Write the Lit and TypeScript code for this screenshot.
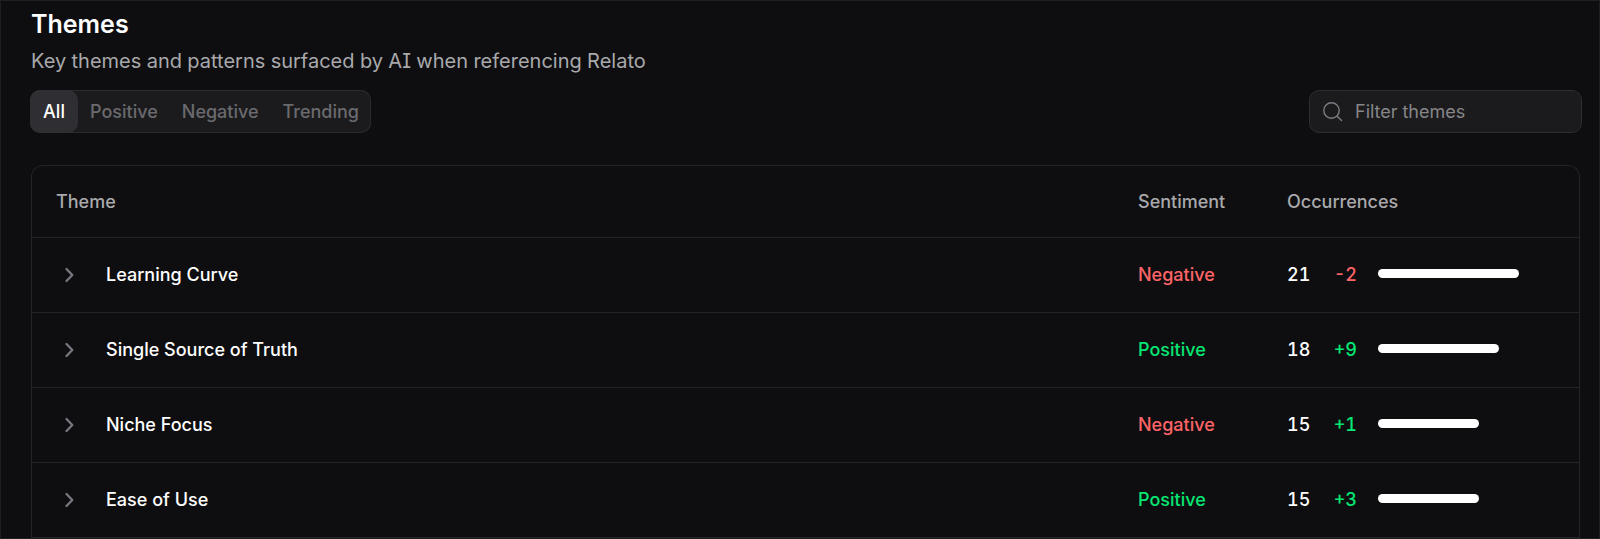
import { LitElement, html, css } from "lit";
import { customElement, state } from "lit/decorators.js";
import { classMap } from "lit/directives/class-map.js";

interface Theme {
  name: string;
  sentiment: "Negative" | "Positive";
  count: number;
  delta: number;
}

const THEMES: Theme[] = [
  { name: "Learning Curve", sentiment: "Negative", count: 21, delta: -2 },
  { name: "Single Source of Truth", sentiment: "Positive", count: 18, delta: 9 },
  { name: "Niche Focus", sentiment: "Negative", count: 15, delta: 1 },
  { name: "Ease of Use", sentiment: "Positive", count: 15, delta: 3 },
];

const TABS = ["All", "Positive", "Negative", "Trending"];

@customElement("app-root")
export class AppRoot extends LitElement {
  @state() private tab = "All";
  @state() private query = "";

  static styles = css`
    :host {
      display: block;
      box-sizing: border-box;
      min-height: 100vh;
      padding: 7px 19px 0 30px;
      border: 1px solid #1f1f21;
      background: #0e0e10;
      color: #fff;
      font: 400 18px/24px Inter, sans-serif;
      font-optical-sizing: none;
      font-feature-settings: "cv08", "tnum";
    }
    *, *::before, *::after { box-sizing: border-box; }
    h1 { margin: 0; font-size: 25px; line-height: 32px; font-weight: 600; }
    .subtitle { margin: 9px 0 0; font-size: 20px; line-height: 24px; color: #a9a9ac; }
    .toolbar {
      display: flex;
      justify-content: space-between;
      align-items: center;
      margin: 17px -2px 0 -1px;
    }
    .tabs {
      display: flex;
      height: 43px;
      border-radius: 10px;
      background: #1b1b1d;
      box-shadow: inset 0 0 0 1px #2b2b2e;
    }
    .tab {
      min-width: 48px;
      padding: 0 12px;
      border: 0;
      border-radius: 10px;
      background: none;
      color: #6a6a6e;
      font: inherit;
      font-optical-sizing: none;
      font-feature-settings: inherit;
      font-weight: 500;
      cursor: pointer;
    }
    .tab.active { background: #2e2e33; color: #fff; }
    .search {
      display: flex;
      align-items: center;
      gap: 11px;
      width: 273px;
      height: 43px;
      padding: 0 12px;
      border: 1px solid #2e2e31;
      border-radius: 10px;
      background: #1b1b1d;
    }
    .search svg { flex: none; width: 22px; height: 22px; }
    .search input {
      flex: 1;
      min-width: 0;
      padding: 0;
      border: 0;
      outline: 0;
      background: none;
      color: #fff;
      font: inherit;
      font-optical-sizing: none;
    }
    .search input::placeholder { color: #868689; opacity: 1; }
    .panel {
      margin-top: 32px;
      border: 1px solid #242427;
      border-bottom: 0;
      border-radius: 12px 12px 0 0;
    }
    table { width: 100%; border-collapse: separate; border-spacing: 0; table-layout: fixed; }
    th, td { padding: 0; text-align: left; vertical-align: middle; border-bottom: 1px solid #242427; }
    th { height: 72px; color: #a9a9ac; font-weight: 500; }
    td { height: 75px; font-weight: 500; }
    th.theme { padding-left: 24px; }
    th.sentiment { width: 149px; }
    th.occurrences { width: 292px; }
    .name { display: flex; align-items: center; gap: 24px; padding-left: 24px; }
    .expand {
      display: flex;
      padding: 0;
      border: 0;
      background: none;
      color: #77777f;
      cursor: pointer;
    }
    .expand svg { width: 26px; height: 26px; }
    .negative { color: #ff6467; }
    .positive { color: #05e673; }
    .counts { display: flex; align-items: center; }
    .count { width: 24px; }
    .delta { width: 46px; text-align: right; }
    .bar { height: 9px; margin: 0 0 3px 21px; border-radius: 5px; background: #fff; }
  `;

  private get rows() {
    const q = this.query.toLowerCase();
    return THEMES.filter(
      (t) =>
        t.name.toLowerCase().includes(q) &&
        (this.tab === "All" || this.tab === t.sentiment || (this.tab === "Trending" && t.delta > 0)),
    );
  }

  private row(t: Theme) {
    const up = t.delta > 0;
    return html`
      <tr>
        <td>
          <div class="name">
            <button class="expand" aria-label="Expand ${t.name}">
              <svg viewBox="0 0 26 26" fill="none" stroke="currentColor" stroke-width="2.3" stroke-linecap="round" stroke-linejoin="round">
                <path d="M10.5 7 L16.3 13 L10.5 19" />
              </svg>
            </button>
            <span>${t.name}</span>
          </div>
        </td>
        <td class=${t.sentiment.toLowerCase()}>${t.sentiment}</td>
        <td>
          <div class="counts">
            <span class="count">${t.count}</span>
            <span class="delta ${up ? "positive" : "negative"}">${up ? "+" : ""}${t.delta}</span>
            <div class="bar" style="width:${Math.round((t.count / 21) * 141)}px"></div>
          </div>
        </td>
      </tr>
    `;
  }

  render() {
    return html`
      <h1>Themes</h1>
      <p class="subtitle">Key themes and patterns surfaced by AI when referencing Relato</p>
      <div class="toolbar">
        <div class="tabs" role="group" aria-label="Filter by sentiment">
          ${TABS.map(
            (t) => html`<button
              class=${classMap({ tab: true, active: t === this.tab })}
              aria-pressed=${t === this.tab}
              @click=${() => (this.tab = t)}
            >${t}</button>`,
          )}
        </div>
        <label class="search">
          <svg viewBox="0 0 22 22" fill="none" stroke="#7b7b83" stroke-width="1.4" stroke-linecap="round" aria-hidden="true">
            <circle cx="9.5" cy="9.5" r="7.7" />
            <path d="M15.2 15.2 L19.5 19.5" />
          </svg>
          <input
            type="text"
            placeholder="Filter themes"
            aria-label="Filter themes"
            @input=${(e: Event) => (this.query = (e.target as HTMLInputElement).value)}
          />
        </label>
      </div>
      <div class="panel">
        <table>
          <thead>
            <tr>
              <th class="theme">Theme</th>
              <th class="sentiment">Sentiment</th>
              <th class="occurrences">Occurrences</th>
            </tr>
          </thead>
          <tbody>${this.rows.map((t) => this.row(t))}</tbody>
        </table>
      </div>
    `;
  }
}
